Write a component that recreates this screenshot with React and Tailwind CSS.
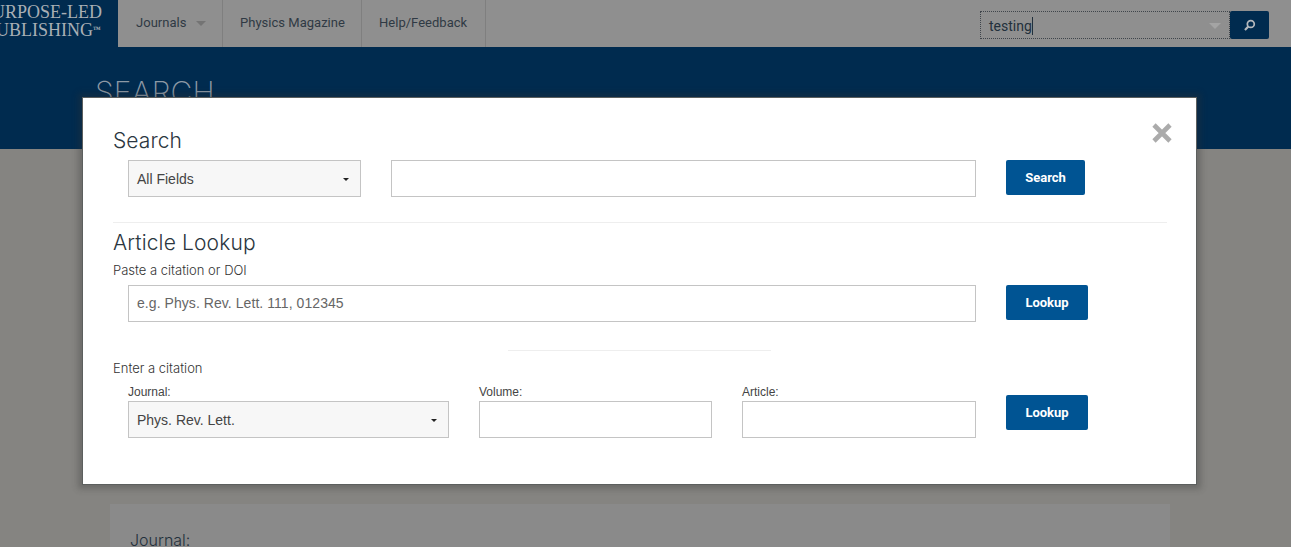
import React from "react";

const inter = "font-['Inter','Liberation_Sans',sans-serif]";
const roboto = "font-['Roboto','Liberation_Sans',sans-serif]";
const arial = "font-['Liberation_Sans',sans-serif]";

function Caret() {
  return <span className="w-0 h-0 border-x-[3px] border-x-transparent border-t-[3px] border-t-[#222]" />;
}

function Select({ label, className }) {
  return (
    <div className={`h-[37px] flex items-center justify-between pl-2 pr-[11px] pt-[2px] border border-[#c4c4c4] bg-[#f7f7f7] text-[14px] text-[#444] ${arial} ${className}`}>
      <span>{label}</span>
      <Caret />
    </div>
  );
}

function Input({ placeholder, className }) {
  return (
    <div className={`h-[37px] flex items-center px-2 pb-[1px] border border-[#c4c4c4] bg-white text-[14px] tracking-[0.06px] text-[#666] ${arial} ${className}`}>
      {placeholder}
    </div>
  );
}

function Btn({ children, className }) {
  return (
    <button className={`h-[35px] rounded-[2px] bg-[#005493] text-white text-[13px] font-bold ${roboto} ${className}`}>
      {children}
    </button>
  );
}

function NavItem({ children, className }) {
  return (
    <div className={`h-full flex items-center pb-[2px] border-r border-[#7f7f7f] text-[13px] tracking-[0.02px] text-[#2f3a44] ${roboto} ${className}`}>
      {children}
    </div>
  );
}

export default function App() {
  return (
    <div className={`relative w-[1291px] h-[547px] overflow-hidden bg-[#858481] ${inter}`}>
      <header className="h-[47px] flex bg-[#8f8f8f]">
        <div className="w-[118px] h-full bg-[#002b4f] overflow-hidden flex flex-col items-end justify-center pr-[16px] pb-[5px] font-['Liberation_Serif',serif] text-[18px] leading-[18px] text-[#a9afb5] whitespace-nowrap">
          <span>PURPOSE-LED</span>
          <span className="pr-[1px]">PUBLISHING<sup className="text-[8px] font-bold">™</sup></span>
        </div>
        <NavItem className="w-[105px] pl-[18px] gap-[10px]">
          Journals
          <span className="w-0 h-0 mt-[2px] border-x-[5px] border-x-transparent border-t-[5px] border-t-[#747474]" />
        </NavItem>
        <NavItem className="w-[139px] pl-[17px]">Physics Magazine</NavItem>
        <NavItem className="w-[124px] pl-[17px]">Help/Feedback</NavItem>
        <div className="flex-1 flex items-start justify-end pt-[11px] pr-[22px]">
          <div className={`w-[250px] h-[28px] flex items-center justify-between pl-[8px] pr-[8px] pt-[1px] border border-dotted border-[#3f454b] text-[14px] text-[#22303c] ${roboto}`}>
            <span className="border-r border-[#22303c] leading-[18px]">testing</span>
            <span className="w-0 h-0 border-x-[6px] border-x-transparent border-t-[6px] border-t-[#a4a4a4]" />
          </div>
          <div className="w-[39px] h-[28px] rounded-[2px] bg-[#002b4f] flex items-center justify-center">
            <svg width="13" height="13" viewBox="0 0 12 12" fill="none" stroke="#b4b8bc" strokeWidth="1.6">
              <circle cx="7.2" cy="4.6" r="3.2" />
              <path d="M4.9 7 L1.8 10.2" strokeWidth="2" />
            </svg>
          </div>
        </div>
      </header>

      <section className="h-[102px] bg-[#002b4f] pl-[95px] pt-[27px]">
        <h1 className="text-[30px] leading-[36px] font-extralight tracking-[0.2px] text-[#8d99a5]">SEARCH</h1>
      </section>

      <div className="ml-[110px] mt-[355px] w-[1060px] h-[60px] bg-[#8a8a8a] pl-[20px] pt-[25px] text-[16px] leading-[22px] font-light text-[#23303c]">
        Journal:
      </div>

      <div className="absolute left-[82px] top-[97px] w-[1115px] h-[388px] bg-white border border-[#5c5f5e] shadow-[0_0_6px_4px_rgba(50,50,50,0.3)]">
        <button className="absolute right-[24px] top-[25px]" aria-label="Close">
          <svg width="20" height="20" viewBox="0 0 20 20" stroke="#ababab" strokeWidth="4.6">
            <path d="M2 2 L18 18 M18 2 L2 18" />
          </svg>
        </button>

        <div className="pl-[30px] pr-[29px] pt-[28px] text-[#3b4650]">
          <h2 className="text-[21px] leading-[30px] font-light tracking-[0.1px] text-[#2b3640]">Search</h2>
          <div className="mt-[4px] pl-[15px] flex items-start">
            <Select label="All Fields" className="w-[233px]" />
            <Input className="ml-[30px] w-[585px]" />
            <Btn className="ml-[30px] w-[79px]">Search</Btn>
          </div>

          <div className="mt-[25px] h-px bg-[#eeeeee]" />

          <h2 className="mt-[5px] text-[21px] leading-[30px] font-light tracking-[0.14px] text-[#2b3640]">Article Lookup</h2>
          <p className="mt-[4px] text-[13px] leading-[16px] font-light text-[#333]">Paste a citation or DOI</p>
          <div className="mt-[7px] pl-[15px] flex items-start">
            <Input placeholder="e.g. Phys. Rev. Lett. 111, 012345" className="w-[848px]" />
            <Btn className="ml-[30px] w-[82px]">Lookup</Btn>
          </div>

          <div className="mt-[28px] ml-[395px] w-[263px] h-px bg-[#eeeeee]" />

          <p className="mt-[9px] text-[13px] leading-[16px] font-light text-[#333]">Enter a citation</p>
          <div className="mt-[9px] pl-[15px] flex items-start">
            <div className="w-[321px]">
              <label className={`block text-[12px] leading-[14px] mb-[2px] text-[#444] ${arial}`}>Journal:</label>
              <Select label="Phys. Rev. Lett." />
            </div>
            <div className="ml-[30px] w-[233px]">
              <label className={`block text-[12px] leading-[14px] mb-[2px] text-[#444] ${arial}`}>Volume:</label>
              <Input />
            </div>
            <div className="ml-[30px] w-[234px]">
              <label className={`block text-[12px] leading-[14px] mb-[2px] text-[#444] ${arial}`}>Article:</label>
              <Input />
            </div>
            <Btn className="ml-[30px] mt-[10px] w-[82px]">Lookup</Btn>
          </div>
        </div>
      </div>
    </div>
  );
}
